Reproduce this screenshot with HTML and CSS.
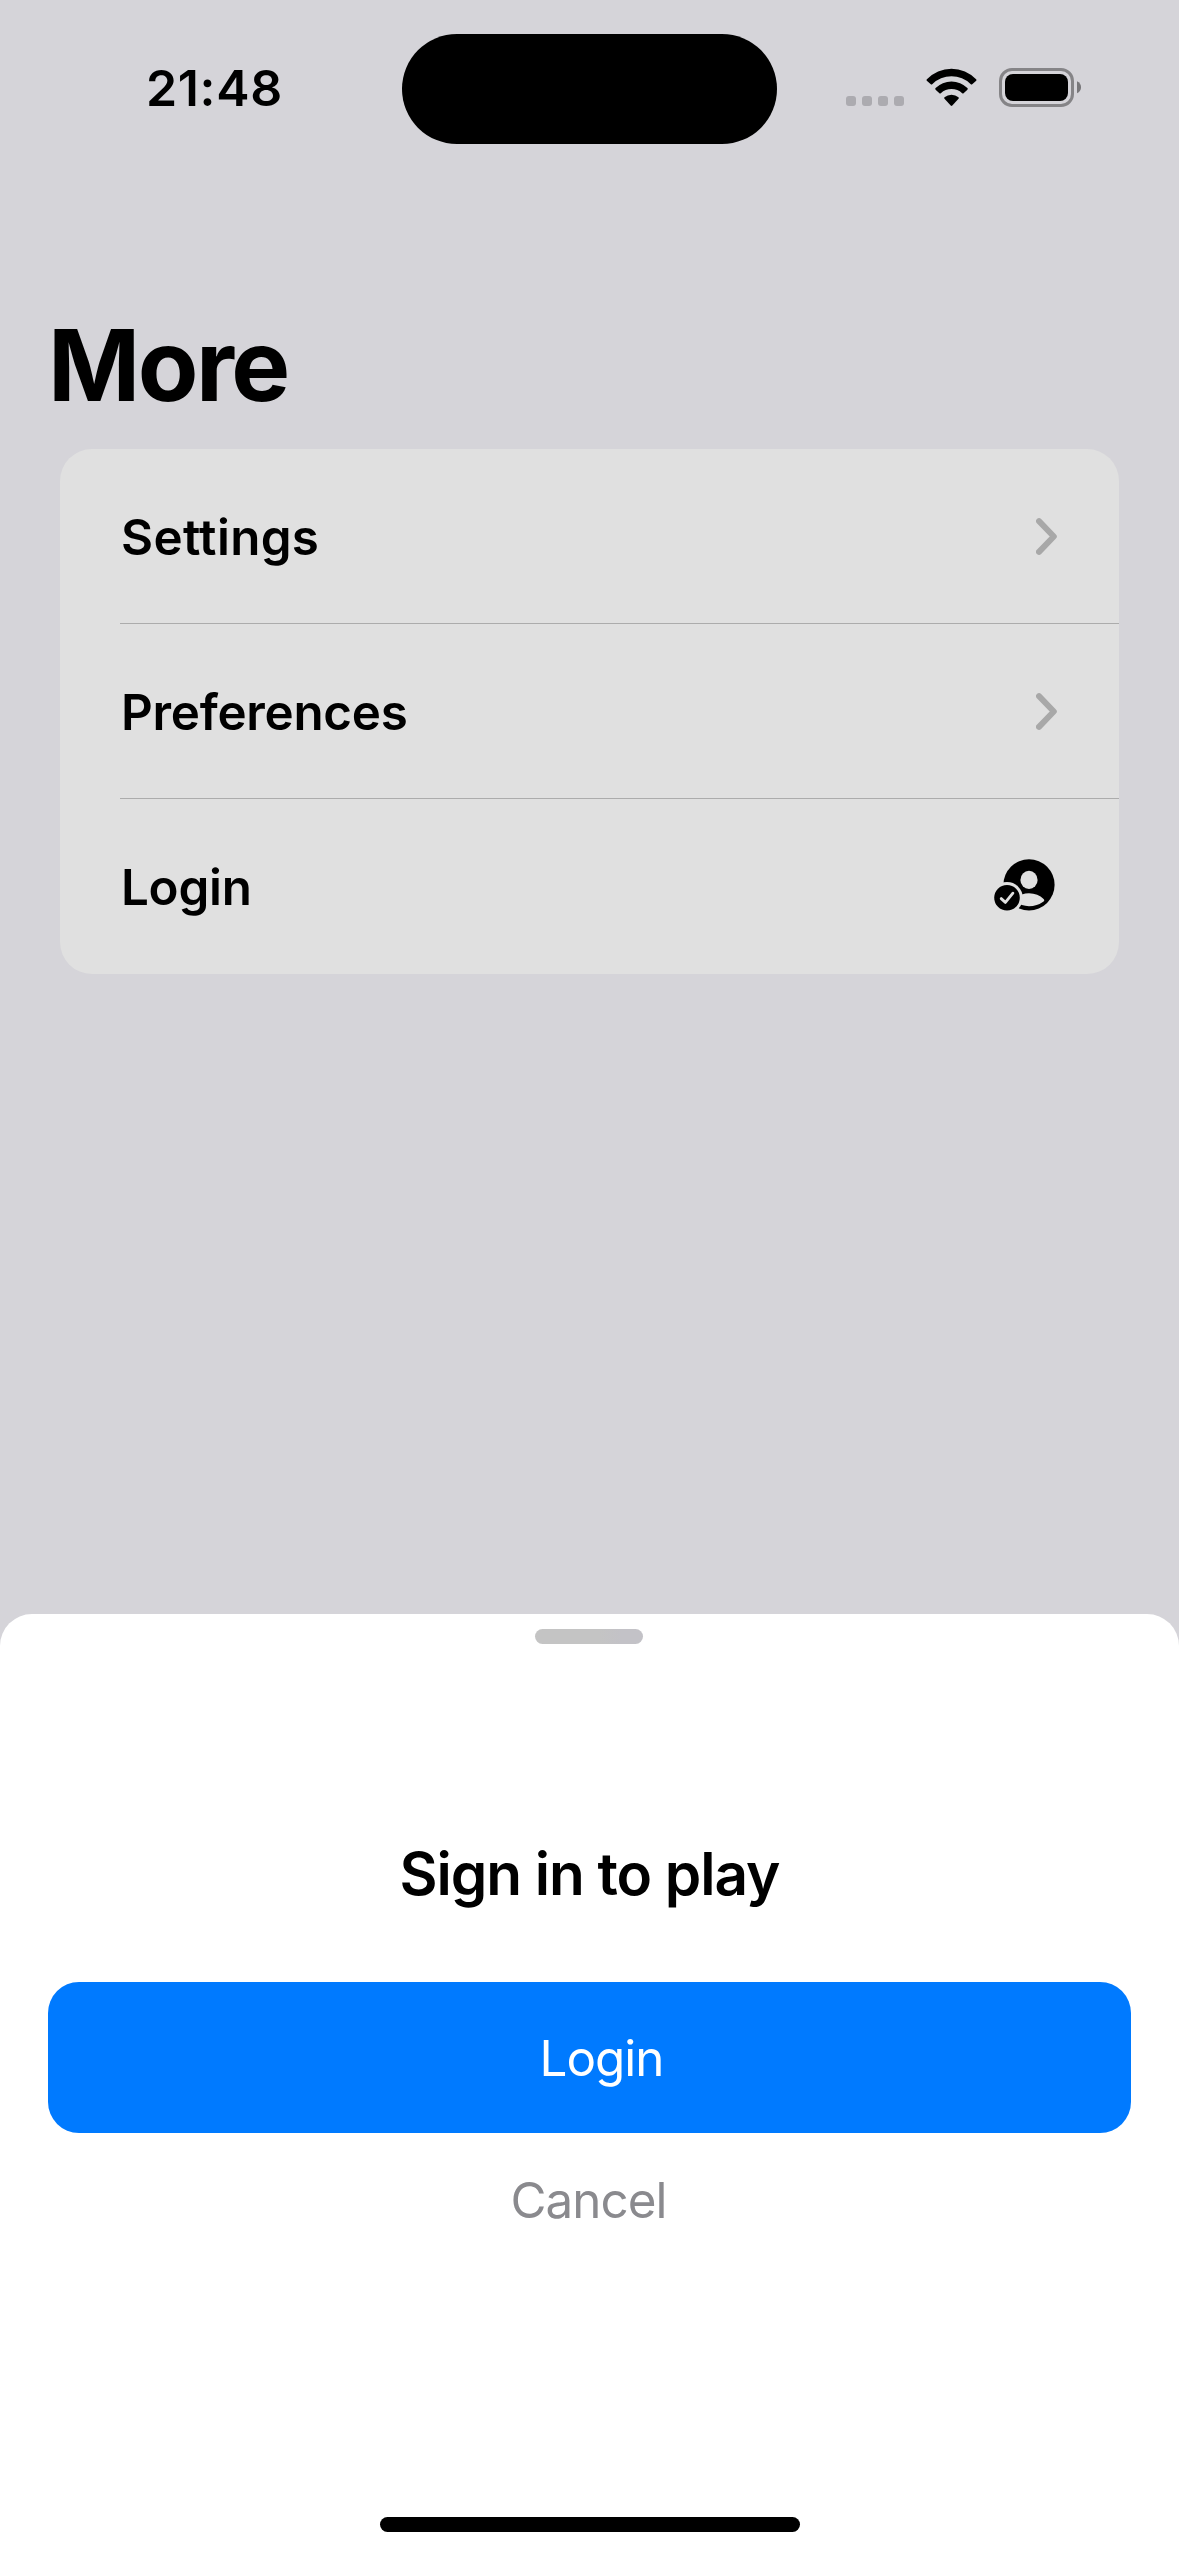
FILE: index.html
```html
<!DOCTYPE html>
<html lang="en">
<head>
<meta charset="utf-8">
<title>More</title>
<link rel="stylesheet" href="styles.css">
</head>
<body>
<div class="screen">
  <header class="status-bar">
    <div class="time">21:48</div>
    <div class="island"></div>
    <div class="indicators">
      <svg class="signal" width="58" height="39" viewBox="0 0 58 39" fill="#acabb0">
        <rect x="0" y="28" width="10" height="10" rx="3"/>
        <rect x="16" y="28" width="10" height="10" rx="3"/>
        <rect x="32" y="28" width="10" height="10" rx="3"/>
        <rect x="48" y="28" width="10" height="10" rx="3"/>
      </svg>
      <svg class="wifi" width="51" height="39" viewBox="0 0 51 39">
        <path d="M0.9 11.3A33.9 33.9 0 0 1 50.1 11.3Q50.9 12 50.2 12.8L46.2 16.3Q45.5 16.9 44.8 16.2A27.5 27.5 0 0 0 6.2 16.2Q5.5 16.9 4.8 16.3L0.8 12.8Q0.1 12 0.9 11.3Z"/>
        <path d="M9.6 20.1A22.5 22.5 0 0 1 41.4 20.1Q42.2 20.9 41.4 21.7L37.6 25.3Q36.9 25.9 36.2 25.2A16 16 0 0 0 14.8 25.2Q14.1 25.9 13.4 25.3L9.6 21.7Q8.8 20.9 9.6 20.1Z"/>
        <path d="M18.5 29.3A10.5 10.5 0 0 1 32.5 29.3Q33.2 30 32.5 30.8L26.3 37.5Q25.5 38.3 24.7 37.5L18.5 30.8Q17.8 30 18.5 29.3Z"/>
      </svg>
      <svg class="battery" width="82" height="39" viewBox="0 0 82 39">
        <rect x="1.5" y="1.5" width="72" height="36" rx="11.5" fill="none" stroke="#858487" stroke-width="3"/>
        <rect x="6" y="6" width="63" height="27" rx="8"/>
        <path d="M78 13.3Q82 15.2 82 19.3Q82 23.4 78 25.3Z" fill="#78777a"/>
      </svg>
    </div>
  </header>

  <main class="page">
    <h1 class="title">More</h1>
    <ul class="card">
      <li class="row">
        <span class="label settings">Settings</span>
        <svg class="chevron" width="21" height="37" viewBox="0 0 21 37"><path d="M3 3.2L17.8 18.5L3 33.8"/></svg>
      </li>
      <li class="row">
        <span class="label preferences">Preferences</span>
        <svg class="chevron" width="21" height="37" viewBox="0 0 21 37"><path d="M3 3.2L17.8 18.5L3 33.8"/></svg>
      </li>
      <li class="row">
        <span class="label login">Login</span>
        <svg class="account" width="61" height="52" viewBox="0 0 61 52">
          <circle cx="35" cy="25.8" r="25.6"/>
          <ellipse class="cutout" cx="35" cy="20.9" rx="8.6" ry="9.1"/>
          <path class="cutout" d="M20 41Q26 34.2 35 34.2Q44 34.4 49.6 40Q51 41.3 49.6 42.4Q43 47.2 35 47.2Q26 47.2 20 41Z"/>
          <circle class="cutout" cx="13" cy="38.8" r="15.8"/>
          <circle cx="13" cy="38.8" r="12.8"/>
          <path class="tick" d="M7.2 39.6L11.4 43.4L18.9 34.2"/>
        </svg>
      </li>
    </ul>
  </main>

  <section class="sheet">
    <div class="grabber"></div>
    <h2 class="prompt">Sign in to play</h2>
    <button class="primary" type="button">Login</button>
    <button class="cancel" type="button">Cancel</button>
    <div class="home-bar"></div>
  </section>
</div>
</body>
</html>
```
FILE: styles.css
```css
* {
  box-sizing: border-box;
}

body {
  margin: 0;
  font-family: Inter, "Liberation Sans", sans-serif;
  color: #000;
  background: #d5d4d9;
}

.screen {
  display: flex;
  flex-direction: column;
  width: 1179px;
  height: 2556px;
  overflow: hidden;
  background: #d5d4d9;
}

.status-bar {
  display: grid;
  grid-template-columns: 402px 375px 402px;
  align-items: center;
  height: 176px;
}

.time {
  padding-left: 146px;
  font-size: 50px;
  font-weight: 600;
  line-height: 60px;
  letter-spacing: 0.65px;
  white-space: nowrap;
}

.island {
  height: 110px;
  margin-top: 2px;
  border-radius: 55px;
  background: #000;
}

.indicators {
  display: flex;
  align-items: center;
  gap: 22px;
  padding: 0 0 1px 69px;
}

.page {
  flex: 1;
}

.title {
  height: 120px;
  margin: 129px 0 24px;
  padding-left: 48px;
  font-size: 99px;
  font-weight: 700;
  line-height: 120px;
  letter-spacing: -2.5px;
}

.card {
  width: 1059px;
  margin: 0 0 0 60px;
  padding: 0;
  list-style: none;
  border-radius: 32px;
  background: #e0e0e0;
}

.row {
  display: flex;
  align-items: center;
  justify-content: space-between;
  height: 175px;
  margin-left: 60px;
  padding: 1px 62px 0 1px;
  border-bottom: 1px solid #acacac;
}

.row:last-child {
  padding-right: 64px;
  border-bottom: 0;
}

.label {
  font-size: 49.3px;
  font-weight: 600;
  line-height: 60px;
}

.settings {
  letter-spacing: 0.35px;
}

.preferences,
.login {
  letter-spacing: -0.25px;
}

.chevron {
  margin-bottom: 1px;
  fill: none;
  stroke: #a8a8a8;
  stroke-width: 6;
  stroke-linecap: round;
  stroke-linejoin: round;
}

.account {
  margin-bottom: 4px;
}

.cutout {
  fill: #e0e0e0;
}

.tick {
  fill: none;
  stroke: #e0e0e0;
  stroke-width: 2.8;
  stroke-linecap: round;
  stroke-linejoin: round;
}

.sheet {
  display: flex;
  flex-direction: column;
  align-items: center;
  height: 942px;
  padding: 15px 48px 24px;
  border-radius: 32px 32px 0 0;
  background: #fff;
}

.grabber {
  width: 108px;
  height: 15px;
  margin-right: 1px;
  border-radius: 8px;
  background: linear-gradient(90deg, #c4c4c4 60%, #c3c2c7 80%);
}

.prompt {
  margin: 194px 0 72px;
  font-size: 58.5px;
  font-weight: 600;
  line-height: 72px;
  letter-spacing: -1.05px;
}

.primary,
.cancel {
  border: 0;
  font-family: inherit;
  font-size: 49.3px;
  font-weight: 400;
  line-height: 60px;
  letter-spacing: -0.95px;
}

.primary {
  width: 1083px;
  height: 151px;
  padding: 0 0 0 24px;
  border-radius: 31px;
  color: #fff;
  background: #007aff;
}

.cancel {
  margin-top: 37px;
  padding: 0 2px 0 0;
  color: #8a8a8e;
  background: none;
}

.home-bar {
  width: 420px;
  height: 15px;
  margin-top: auto;
  border-radius: 8px;
  background: #000;
}
```
